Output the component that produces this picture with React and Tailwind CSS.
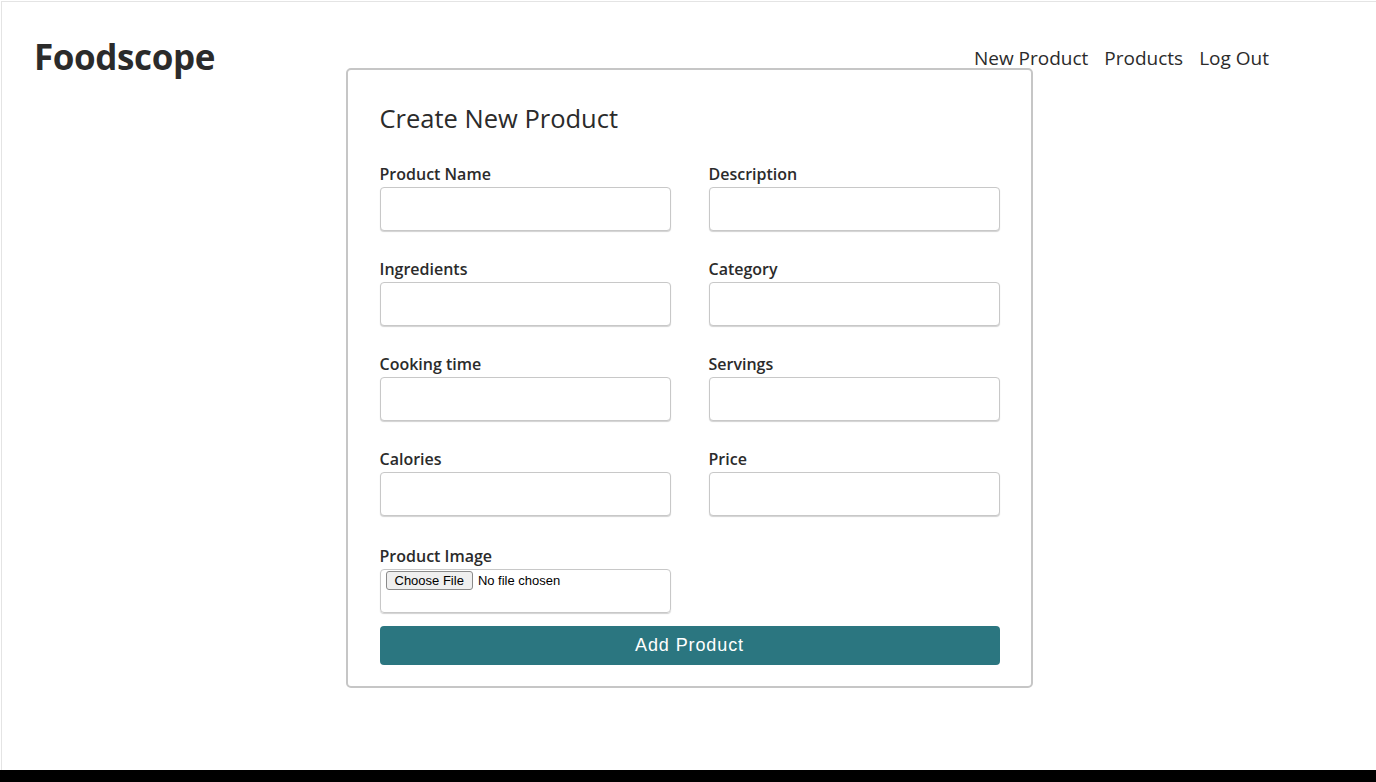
const fields = [
  ['Product Name', 'Description'],
  ['Ingredients', 'Category'],
  ['Cooking time', 'Servings'],
  ['Calories', 'Price'],
];

const Field = ({ label }) => (
  <div className="flex flex-col">
    <label className="text-[16px] font-semibold leading-[20px] text-[#2b2b2b] mb-[3px]">{label}</label>
    <input
      type="text"
      className="h-[44px] w-full rounded-[4px] border border-[#c8c8c8] shadow-[0_1px_1px_rgba(0,0,0,0.18)] bg-white outline-none"
    />
  </div>
);

export default function App() {
  return (
    <div className="h-[782px] w-full flex flex-col bg-white" style={{ fontFamily: '"Open Sans", "Noto Sans", sans-serif' }}>
      <div className="flex-1 pt-px pl-px">
        <div className="h-full border-t border-l border-[#e4e4e4]">
          {/* header */}
          <header className="h-[66px] flex items-start justify-between pl-[32px] pr-[107px]">
            <h1 className="pt-[37px] text-[35px] font-bold leading-none tracking-[-0.4px] text-[#2b2b2b]">Foodscope</h1>
            <nav className="pt-[47px] flex gap-4 text-[19px] leading-none text-[#2b2b2b]">
              <a href="#">New Product</a>
              <a href="#">Products</a>
              <a href="#">Log Out</a>
            </nav>
          </header>

          {/* form card */}
          <div className="w-[687px] mx-auto rounded-[5px] border-2 border-[#c6c6c6] pl-[32px] pr-[31px] pt-[36px] pb-[21px]">
            <h2 className="text-[25.5px] font-medium leading-none text-[#2b2b2b] mb-[32px]">Create New Product</h2>
            <div className="grid grid-cols-2 gap-x-[38px] gap-y-[28px]">
              {fields.map(([a, b]) => (
                <>
                  <Field key={a} label={a} />
                  <Field key={b} label={b} />
                </>
              ))}
              <div className="flex flex-col mt-[2px]">
                <label className="text-[16px] font-semibold leading-[20px] text-[#2b2b2b] mb-[3px]">Product Image</label>
                <div className="h-[44px] rounded-[4px] border border-[#c8c8c8] shadow-[0_1px_1px_rgba(0,0,0,0.18)] pl-[5px] pt-[1px] flex items-start gap-[5px]" style={{ fontFamily: 'Arial, "Liberation Sans", sans-serif' }}>
                  <span className="text-[13px] leading-[17px] px-[8px] border border-[#8a8a8a] rounded-[3px] bg-[#efefef] text-black">Choose File</span>
                  <span className="text-[13px] leading-[19px] text-black">No file chosen</span>
                </div>
              </div>
            </div>
            <button
              className="mt-[13px] w-full h-[39px] rounded-[4px] bg-[#2b7680] text-white text-[18px] tracking-[0.9px]"
              style={{ fontFamily: 'Arial, "Liberation Sans", sans-serif' }}
            >
              Add Product
            </button>
          </div>
        </div>
      </div>
      <div className="h-[12px] bg-black" />
    </div>
  );
}
